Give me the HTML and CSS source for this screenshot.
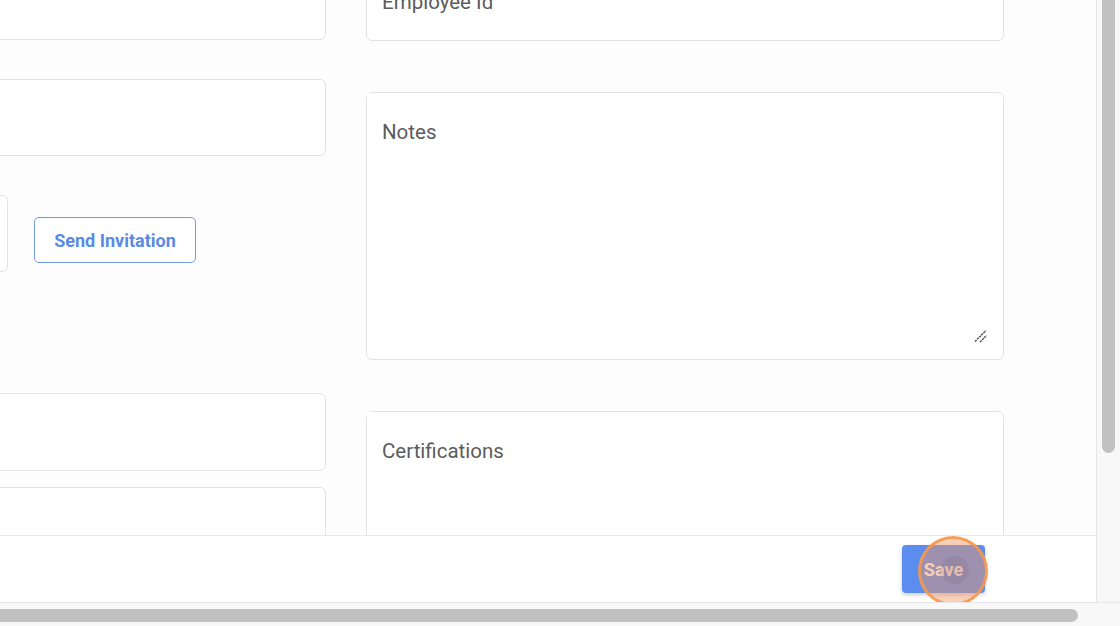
FILE: index.html
```html
<!DOCTYPE html>
<html lang="en">
<head>
    <meta charset="UTF-8">
    <meta name="viewport" content="width=device-width, initial-scale=1.0">
    <title>Edit Employee</title>
    <link rel="stylesheet" href="styles.css">
</head>
<body>
    <div class="frame">
        <div class="main">
            <div class="content">
                <form class="form">
                    <div class="col col-left">
                        <input class="field field-a" type="text" placeholder="First Name">
                        <input class="field field-b" type="text" placeholder="Last Name">
                        <div class="invite-row">
                            <input class="field field-email" type="email" placeholder="Email">
                            <button type="button" class="btn-outline">Send Invitation</button>
                        </div>
                        <input class="field field-d" type="text" placeholder="Phone">
                        <input class="field field-e" type="text" placeholder="Title">
                    </div>
                    <div class="col col-right">
                        <input class="field field-id" type="text" placeholder="Employee Id">
                        <div class="area-wrap area-notes">
                            <textarea class="area" placeholder="Notes"></textarea>
                            <svg class="grip" width="14" height="14" viewBox="0 0 14 14">
                                <line x1="1" y1="12.5" x2="12" y2="1.5" />
                                <line x1="6" y1="13" x2="12.5" y2="6.5" />
                            </svg>
                        </div>
                        <div class="area-wrap area-certs">
                            <textarea class="area" placeholder="Certifications"></textarea>
                        </div>
                    </div>
                </form>
            </div>
            <div class="footer">
                <button type="button" class="btn-save">
                    Save
                    <span class="click-ring"><span class="click-dot"></span></span>
                </button>
            </div>
        </div>
        <div class="vscroll"><div class="vthumb"></div></div>
        <div class="hscroll"><div class="hthumb"></div></div>
    </div>
</body>
</html>
```

FILE: styles.css
```css
* {
    box-sizing: border-box;
}
body {
    margin: 0;
    font-family: Roboto, 'Liberation Sans', Arial, sans-serif;
    background: #fdfdfd;
    overflow: hidden;
}
.frame {
    display: grid;
    grid-template-columns: 1097px 23px;
    grid-template-rows: 602px 24px;
    width: 1120px;
    height: 626px;
}
.main {
    display: flex;
    flex-direction: column;
    overflow: hidden;
    border-right: 1px solid #e6e6e6;
}
.content {
    flex: 1;
    overflow: hidden;
}
.form {
    display: grid;
    grid-template-columns: 726px 638px;
    column-gap: 40px;
    margin: -37px 0 0 -400px;
}
.col {
    display: flex;
    flex-direction: column;
}
.field {
    display: block;
    width: 100%;
    height: 77px;
    padding: 0 15px;
    border: 1px solid #e3e3e3;
    border-radius: 6px;
    background: white;
    font-family: inherit;
    font-size: 20.5px;
    color: #333;
    outline: none;
}
.field::placeholder,
.area::placeholder {
    color: #5c5c5c;
    opacity: 1;
}
.col-left .field::placeholder {
    color: transparent;
}
.field-b {
    margin-top: 39px;
}
.invite-row {
    display: flex;
    align-items: flex-start;
    margin-top: 39px;
}
.field-email {
    width: 408px;
    flex: none;
}
.btn-outline {
    margin: 22px 0 0 26px;
    width: 162px;
    height: 46px;
    background: white;
    color: #5a8ae6;
    border: 1px solid #7199e6;
    border-radius: 5px;
    font-family: inherit;
    font-size: 18px;
    font-weight: bold;
    cursor: pointer;
}
.field-d {
    margin-top: 121px;
    height: 78px;
}
.field-e {
    margin-top: 16px;
}
.field-id {
    height: 78px;
}
.area-wrap {
    position: relative;
    display: flex;
    border: 1px solid #e3e3e3;
    border-radius: 6px;
    background: white;
    padding: 0 14px 15px 0;
}
.area-notes {
    margin-top: 51px;
    height: 268px;
}
.area-certs {
    margin-top: 51px;
    height: 268px;
}
.area {
    flex: 1;
    border: none;
    outline: none;
    resize: none;
    background: white;
    padding: 27px 0 0 15px;
    font-family: inherit;
    font-size: 20.5px;
    line-height: 24px;
    color: #333;
}
.grip {
    position: absolute;
    right: 15px;
    bottom: 16px;
    stroke: #4a4a4a;
    stroke-width: 1.4;
    stroke-dasharray: 2.2 0.8;
}
.footer {
    height: 67px;
    flex: none;
    display: flex;
    justify-content: flex-end;
    align-items: center;
    padding-right: 111px;
    background: white;
    border-top: 1px solid #e8e8e8;
}
.btn-save {
    position: relative;
    width: 83px;
    height: 48px;
    background: #5b8def;
    color: white;
    border: none;
    border-radius: 4px;
    box-shadow: 0 2px 4px rgba(0,0,0,0.2);
    font-family: inherit;
    font-size: 18px;
    font-weight: bold;
    cursor: pointer;
}
.click-ring {
    position: absolute;
    left: 16px;
    top: -9px;
    width: 70px;
    height: 70px;
    border: 3px solid rgba(246,152,78,0.9);
    border-radius: 50%;
    background: rgba(240,150,100,0.45);
}
.click-dot {
    position: absolute;
    left: 20px;
    top: 17px;
    width: 28px;
    height: 28px;
    border-radius: 50%;
    background: rgba(110,80,110,0.15);
}
.vscroll {
    background: #f8f8f8;
    padding-left: 5px;
}
.vthumb {
    width: 13px;
    height: 453px;
    background: #c1c1c1;
    border-radius: 0 0 7px 7px;
}
.hscroll {
    grid-column: 1 / span 2;
    background: #f8f8f8;
    border-top: 1px solid #e6e6e6;
    padding-top: 6px;
}
.hthumb {
    width: 1078px;
    height: 13px;
    background: #c1c1c1;
    border-radius: 0 7px 7px 0;
}
```
